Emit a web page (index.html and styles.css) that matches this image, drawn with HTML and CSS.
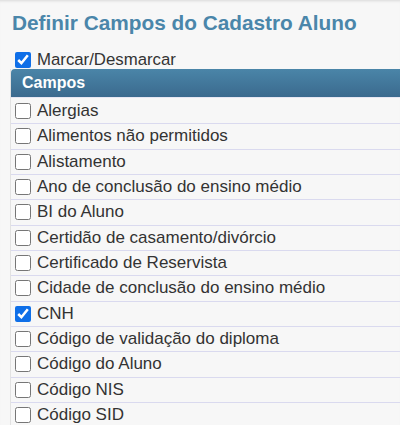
FILE: index.html
```html
<!DOCTYPE html>
<html lang="pt">
<head>
<meta charset="utf-8">
<title>Definir Campos do Cadastro Aluno</title>
<link rel="stylesheet" href="styles.css">
</head>
<body>
<div class="page">
  <h1 class="title">Definir Campos do Cadastro Aluno</h1>
  <label class="toggle-all"><input type="checkbox" class="chk" checked><span>Marcar/Desmarcar</span></label>
  <div class="table">
    <div class="thead">Campos</div>
    <label class="row"><input type="checkbox" class="chk"><span>Alergias</span></label>
    <label class="row"><input type="checkbox" class="chk"><span>Alimentos não permitidos</span></label>
    <label class="row"><input type="checkbox" class="chk"><span>Alistamento</span></label>
    <label class="row"><input type="checkbox" class="chk"><span>Ano de conclusão do ensino médio</span></label>
    <label class="row"><input type="checkbox" class="chk"><span>BI do Aluno</span></label>
    <label class="row"><input type="checkbox" class="chk"><span>Certidão de casamento/divórcio</span></label>
    <label class="row"><input type="checkbox" class="chk"><span>Certificado de Reservista</span></label>
    <label class="row"><input type="checkbox" class="chk"><span>Cidade de conclusão do ensino médio</span></label>
    <label class="row"><input type="checkbox" class="chk" checked><span>CNH</span></label>
    <label class="row"><input type="checkbox" class="chk"><span>Código de validação do diploma</span></label>
    <label class="row"><input type="checkbox" class="chk"><span>Código do Aluno</span></label>
    <label class="row"><input type="checkbox" class="chk"><span>Código NIS</span></label>
    <label class="row"><input type="checkbox" class="chk"><span>Código SID</span></label>
  </div>
</div>
</body>
</html>
```

FILE: styles.css
```css
html, body {
  margin: 0;
  padding: 0;
  background: #f7f7f7;
  overflow: hidden;
}
body {
  font-family: "Liberation Sans", Arial, sans-serif;
  color: #333;
  box-shadow: inset 0 3px 3px -2px rgba(0,0,0,0.12);
}
.page {
  padding-top: 11px;
}
.title {
  margin: 0 0 0 12px;
  font-size: 20.8px;
  line-height: 24px;
  font-weight: bold;
  color: #4a86aa;
}
.toggle-all {
  display: flex;
  align-items: center;
  margin-top: 16px;
  padding-left: 15px;
  height: 17px;
  font-size: 16.8px;
  line-height: 17px;
}
.chk {
  width: 16px;
  height: 16px;
  margin: 0 6px 0 0;
  flex: none;
  accent-color: #0f6fe8;
}
.table {
  margin: 1px 0 0 10px;
  border-left: 1px solid #e2e2e2;
}
.thead {
  height: 28px;
  line-height: 28px;
  padding-left: 11px;
  color: #fff;
  font-weight: bold;
  font-size: 16px;
  background: linear-gradient(#4a85a8, #3b6a8e);
  border-top-left-radius: 4px;
  border-bottom: 1px solid #e6e6f2;
}
.row {
  display: flex;
  align-items: center;
  height: 24.33px;
  padding-left: 4px;
  border-bottom: 1px solid #dadaef;
  font-size: 17px;
}
.row:first-of-type {
  padding-top: 1px;
}
```
